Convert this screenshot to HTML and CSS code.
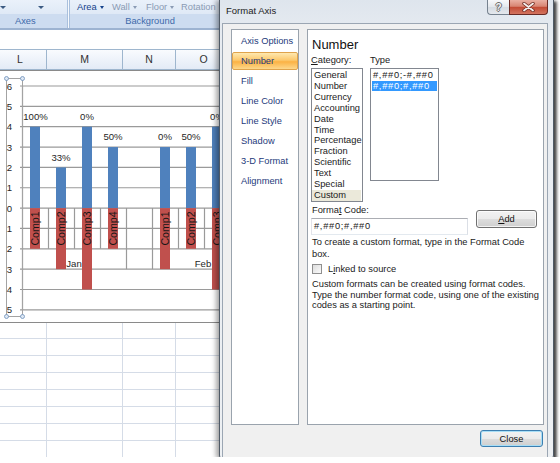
FILE: index.html
```html
<!DOCTYPE html>
<html>
<head>
<meta charset="utf-8">
<title>Format Axis</title>
<link rel="stylesheet" href="styles.css">
</head>
<body>
<div class="shot">
  <div class="excel">
    <div class="ribbon">
      <div class="grp grp-axes">
        <div class="grp-top"><span class="dd dd-a"></span><span class="dd dd-b"></span></div>
        <div class="grp-label">Axes</div>
      </div>
      <div class="grp-sep"></div>
      <div class="grp grp-bg">
        <div class="grp-top">
          <span class="rb rb-on rb-w35">Area<i class="caret"></i></span>
          <span class="rb rb-w34">Wall<i class="caret"></i></span>
          <span class="rb rb-w35">Floor<i class="caret"></i></span>
          <span class="rb">Rotation</span>
        </div>
        <div class="grp-label grp-label-c">Background</div>
      </div>
    </div>
    <div class="fbar"></div>
    <div class="colhdr">
      <div class="ch ch-l">L</div>
      <div class="ch ch-m">M</div>
      <div class="ch ch-n">N</div>
      <div class="ch ch-o">O</div>
    </div>
    <svg class="chart" viewBox="0 70 250 253" width="250" height="253">
      <rect class="c-area" x="-1.5" y="70.5" width="252" height="252"/>
      <g class="c-grid">
        <line x1="20" x2="250" y1="86" y2="86"/>
        <line x1="20" x2="250" y1="106.35" y2="106.35"/>
        <line x1="20" x2="250" y1="126.7" y2="126.7"/>
        <line x1="20" x2="250" y1="147.05" y2="147.05"/>
        <line x1="20" x2="250" y1="167.4" y2="167.4"/>
        <line x1="20" x2="250" y1="187.75" y2="187.75"/>
        <line x1="20" x2="250" y1="208.1" y2="208.1"/>
        <line x1="20" x2="250" y1="228.45" y2="228.45"/>
        <line x1="20" x2="250" y1="248.8" y2="248.8"/>
        <line x1="20" x2="250" y1="269.15" y2="269.15"/>
        <line x1="20" x2="250" y1="289.5" y2="289.5"/>
        <line x1="20" x2="250" y1="309.85" y2="309.85"/>
      </g>
      <g class="c-ticks">
        <line x1="48.5" x2="48.5" y1="208" y2="248.8"/>
        <line x1="74.5" x2="74.5" y1="208" y2="248.8"/>
        <line x1="100.5" x2="100.5" y1="208" y2="248.8"/>
        <line x1="126.5" x2="126.5" y1="208" y2="269.15"/>
        <line x1="152.5" x2="152.5" y1="208" y2="269.15"/>
        <line x1="178.5" x2="178.5" y1="208" y2="248.8"/>
        <line x1="204.5" x2="204.5" y1="208" y2="248.8"/>
        <line x1="230.5" x2="230.5" y1="208" y2="248.8"/>
      </g>
      <line class="c-axis" x1="22.5" x2="22.5" y1="86" y2="310"/>
      <rect class="c-selbox" x="6.5" y="78.5" width="16" height="238"/>
      <g class="c-bars">
        <rect class="b-pos" x="30" y="126.7" width="10" height="81.4"/>
        <rect class="b-neg" x="30" y="208.1" width="10" height="40.7"/>
        <rect class="b-pos" x="56" y="167.4" width="10" height="40.7"/>
        <rect class="b-neg" x="56" y="208.1" width="10" height="61.05"/>
        <rect class="b-pos" x="82" y="126.7" width="10" height="81.4"/>
        <rect class="b-neg" x="82" y="208.1" width="10" height="81.4"/>
        <rect class="b-pos" x="108" y="147.05" width="10" height="61.05"/>
        <rect class="b-neg" x="108" y="208.1" width="10" height="40.7"/>
        <rect class="b-pos" x="160" y="147.05" width="10" height="61.05"/>
        <rect class="b-neg" x="160" y="208.1" width="10" height="61.05"/>
        <rect class="b-pos" x="186" y="147.05" width="10" height="61.05"/>
        <rect class="b-neg" x="186" y="208.1" width="10" height="40.7"/>
        <rect class="b-pos" x="212" y="126.7" width="10" height="81.4"/>
        <rect class="b-neg" x="212" y="208.1" width="10" height="81.4"/>
      </g>
      <g class="c-ylabs">
        <text class="c-ylab" x="6.8" y="86">6</text>
        <text class="c-ylab" x="6.8" y="106.35">5</text>
        <text class="c-ylab" x="6.8" y="126.7">4</text>
        <text class="c-ylab" x="6.8" y="147.05">3</text>
        <text class="c-ylab" x="6.8" y="167.4">2</text>
        <text class="c-ylab" x="6.8" y="187.75">1</text>
        <text class="c-ylab" x="6.8" y="208.1">0</text>
        <text class="c-ylab" x="6.8" y="228.45">1</text>
        <text class="c-ylab" x="6.8" y="248.8">2</text>
        <text class="c-ylab" x="6.8" y="269.15">3</text>
        <text class="c-ylab" x="6.8" y="289.5">4</text>
        <text class="c-ylab" x="6.8" y="309.85">5</text>
      </g>
      <g class="c-dlabs">
        <text class="c-mid" x="35.5" y="116">100%</text>
        <text class="c-mid" x="61" y="157">33%</text>
        <text class="c-mid" x="87" y="116">0%</text>
        <text class="c-mid" x="113" y="136">50%</text>
        <text class="c-mid" x="165" y="136">0%</text>
        <text class="c-mid" x="191" y="136">50%</text>
        <text class="c-mid" x="217" y="116">0%</text>
      </g>
      <g class="c-cats">
        <text class="c-mid c-cat" x="35" y="228.5" transform="rotate(-90 35 228.5)">Comp1</text>
        <text class="c-mid c-cat" x="61" y="228.5" transform="rotate(-90 61 228.5)">Comp2</text>
        <text class="c-mid c-cat" x="87" y="228.5" transform="rotate(-90 87 228.5)">Comp3</text>
        <text class="c-mid c-cat" x="113" y="228.5" transform="rotate(-90 113 228.5)">Comp4</text>
        <text class="c-mid c-cat" x="165" y="228.5" transform="rotate(-90 165 228.5)">Comp1</text>
        <text class="c-mid c-cat" x="191" y="228.5" transform="rotate(-90 191 228.5)">Comp2</text>
        <text class="c-mid c-cat" x="217" y="228.5" transform="rotate(-90 217 228.5)">Comp3</text>
        <text class="c-mid" x="74" y="263">Jan</text>
        <text class="c-mid" x="203" y="263">Feb</text>
      </g>
      <g class="c-handles">
        <circle cx="6.5" cy="78.5" r="2"/>
        <circle cx="22.5" cy="78.5" r="2"/>
        <circle cx="6.5" cy="316.5" r="2"/>
        <circle cx="22.5" cy="316.5" r="2"/>
      </g>
    </svg>
    <div class="cells">
      <div class="cc cc-l"></div>
      <div class="cc cc-m"></div>
      <div class="cc cc-n"></div>
      <div class="cc cc-o"></div>
    </div>
  </div>

  <div class="dialog">
    <div class="titlebar">
      <span class="dlg-title">Format Axis</span>
      <div class="capbtns">
        <span class="cap cap-help">?</span>
        <span class="cap cap-close">
          <svg class="xglyph" width="13" height="10" viewBox="0 0 13 10">
            <path class="x-out" d="M2 1.5 L11 8.5 M11 1.5 L2 8.5"/>
            <path class="x-in" d="M2 1.5 L11 8.5 M11 1.5 L2 8.5"/>
          </svg>
        </span>
      </div>
    </div>
    <div class="client">
      <div class="panes">
        <ul class="navlist">
          <li>Axis Options</li>
          <li class="is-sel">Number</li>
          <li>Fill</li>
          <li>Line Color</li>
          <li>Line Style</li>
          <li>Shadow</li>
          <li>3-D Format</li>
          <li>Alignment</li>
        </ul>
        <div class="panel">
          <div class="ph">Number</div>
          <div class="lists">
            <div class="lcol">
              <div class="lbl"><u>C</u>ategory:</div>
              <ul class="lb lb-cat">
                <li>General</li>
                <li>Number</li>
                <li>Currency</li>
                <li>Accounting</li>
                <li>Date</li>
                <li>Time</li>
                <li>Percentage</li>
                <li>Fraction</li>
                <li>Scientific</li>
                <li>Text</li>
                <li>Special</li>
                <li class="is-cur">Custom</li>
              </ul>
            </div>
            <div class="lcol lcol-type">
              <div class="lbl">Type</div>
              <ul class="lb lb-type">
                <li class="code">#,##0;-#,##0</li>
                <li class="code is-act">#,##0;#,##0</li>
              </ul>
            </div>
          </div>
          <div class="fc-row">
            <div class="fc-col">
              <div class="lbl">Forma<u>t</u> Code:</div>
              <div class="input code">#,##0;#,##0</div>
            </div>
            <div class="btn btn-add"><u>A</u>dd</div>
          </div>
          <p class="hint">To create a custom format, type in the Format Code<br>box.</p>
          <div class="chk"><span class="chkbox"></span><span>L<u>i</u>nked to source</span></div>
          <p class="note">Custom formats can be created using format codes.<br>Type the number format code, using one of the existing<br>codes as a starting point.</p>
        </div>
      </div>
      <div class="foot"><div class="btn btn-close">Close</div></div>
    </div>
  </div>
</div>
</body>
</html>
```

FILE: styles.css
```css
* { box-sizing: border-box; }
html, body { margin: 0; padding: 0; background: #fff; }
body { font-family: "Liberation Sans", Arial, sans-serif; }

.shot {
  position: relative;
  width: 554px;
  height: 457px;
  box-shadow: 2px 2px 3px 1px rgba(0,0,0,.45);
}

/* ---------- Excel background ---------- */
.excel {
  width: 554px;
  height: 457px;
  overflow: hidden;
  display: flex;
  flex-direction: column;
  background: #fff;
}
.ribbon {
  flex: none;
  height: 30px;
  display: flex;
  border-bottom: 2px solid #9db3d1;
  background: #e3ecf8;
}
.grp { flex: none; display: flex; flex-direction: column; }
.grp-axes { width: 67px; }
.grp-bg { width: 160px; }
.grp-sep {
  flex: none;
  width: 3px;
  border-left: 1px solid #a9c0dd;
  border-right: 1px solid #a9c0dd;
  background: #f6f9fd;
}
.grp-top {
  height: 14px;
  display: flex;
  align-items: center;
  font-size: 9.3px;
  background: linear-gradient(#eaf1fa, #dfe9f6);
}
.grp-bg .grp-top { padding-left: 7px; }
.grp-label {
  height: 14px;
  line-height: 14px;
  font-size: 9.3px;
  color: #3e6aaa;
  background: #cddcf0;
  padding-left: 15px;
  white-space: nowrap;
}
.grp-label-c { padding-left: 0; text-align: center; }
.dd {
  width: 0; height: 0;
  border-left: 3px solid transparent;
  border-right: 3px solid transparent;
  border-top: 3px solid #3b5a82;
}
.dd-b { margin-left: 32px; }
.rb { flex: none; color: #8b9bb4; white-space: nowrap; display: flex; align-items: center; }
.rb-on { color: #15428b; }
.rb-w35 { width: 35px; }
.rb-w34 { width: 34px; }
.caret {
  display: inline-block;
  margin-left: 3px;
  width: 0; height: 0;
  border-left: 2.5px solid transparent;
  border-right: 2.5px solid transparent;
  border-top: 3px solid currentColor;
}
.fbar { flex: none; height: 19px; background: #fff; }
.colhdr {
  flex: none;
  height: 21px;
  display: flex;
  border-top: 1px solid #9eb6ce;
  border-bottom: 1px solid #9eb6ce;
  background: linear-gradient(#f9fbfe, #e3ebf6);
}
.ch {
  flex: none;
  font-size: 10.5px;
  line-height: 19px;
  color: #333;
  text-align: center;
  border-right: 1px solid #9eb6ce;
}
.ch-l { width: 47px; padding-right: 6px; }
.ch-m { width: 76px; }
.ch-n { width: 53px; }
.ch-o { width: 56px; }

.chart { display: block; flex: none; width: 250px; height: 253px; }
.chart text {
  font-family: "Liberation Sans", Arial, sans-serif;
  font-size: 9.6px;
  fill: #1f1f1f;
}
.chart text.c-cat { font-size: 10.6px; fill: #161616; }
.c-mid { text-anchor: middle; dominant-baseline: central; }
.c-ylab { dominant-baseline: central; }
.c-area { fill: #fff; stroke: #8a8a8a; }
.c-grid line, .c-ticks line { stroke: #9a9a9a; stroke-width: 1.2; }
.c-axis { stroke: #868686; stroke-width: 1.2; }
.c-selbox { fill: none; stroke: #a3a3a3; }
.b-pos { fill: #4f81bd; }
.b-neg { fill: #c0504d; }
.c-handles circle { fill: #dfe9f5; stroke: #6d8fba; stroke-width: .8; }

.cells {
  flex: 1;
  display: flex;
  background: repeating-linear-gradient(#fff 0 16px, #d5dce7 16px 17px);
  background-position: 0 -1px;
}
.cc { flex: none; border-right: 1px solid #d5dce7; }
.cc-l { width: 47px; }
.cc-m { width: 76px; }
.cc-n { width: 53px; }
.cc-o { width: 56px; }

/* ---------- Dialog (a window floating over the sheet) ---------- */
.dialog {
  position: absolute;
  left: 219px;
  top: 0;
  width: 335px;
  height: 461px;
  display: flex;
  flex-direction: column;
  border: 1px solid #4f5a66;
  border-top: 0;
  border-radius: 0 0 6px 6px;
  background: linear-gradient(#dee5ed, #e8ecf1 40px, #edf0f3);
  box-shadow: -3px 0 5px rgba(0,0,0,.35), 2px 2px 3px rgba(0,0,0,.5);
  font-size: 9.3px;
  color: #1a1a1a;
}
.titlebar {
  flex: none;
  height: 23px;
  display: flex;
  justify-content: space-between;
  align-items: flex-start;
  padding: 0 5px 0 6px;
}
.dlg-title { line-height: 22px; font-size: 9.5px; color: #1c1c1c; }
.capbtns { display: flex; }
.cap {
  height: 15px;
  display: flex;
  align-items: center;
  justify-content: center;
}
.cap-help {
  width: 22px;
  border: 1px solid #76828f;
  border-top: 0;
  border-right: 0;
  border-radius: 0 0 0 4px;
  background: linear-gradient(#f8f9fb, #e3e7ec 50%, #d5dbe2 51%, #e4e8ed);
  color: #f4f4f4;
  font-size: 10px;
  font-weight: bold;
  text-shadow: 1px 0 #6a6a6a, -1px 0 #6a6a6a, 0 1px #6a6a6a, 0 -1px #6a6a6a;
}
.cap-close {
  width: 39px;
  border: 1px solid #6a2a24;
  border-top: 0;
  border-radius: 0 0 4px 0;
  background: linear-gradient(#eab0a3, #d88573 45%, #c34b35 52%, #d3745f);
}
.xglyph { display: block; }
.x-out { stroke: #6d2a20; stroke-width: 3.4; stroke-linecap: round; fill: none; }
.x-in { stroke: #f6f0ee; stroke-width: 1.8; stroke-linecap: round; fill: none; }

.client {
  flex: 1;
  margin: 0 5px 2px 2px;
  border: 1px solid #9ba6b3;
  background: #f0f0f0;
  display: flex;
  flex-direction: column;
  padding: 5px 3px 0 8px;
}
.panes { flex: none; height: 396px; display: flex; gap: 8px; }
.navlist {
  flex: none;
  width: 68px;
  margin: 0;
  padding: 1px 0;
  list-style: none;
  border: 1px solid #9aa3ad;
  background: #fff;
}
.navlist li {
  height: 20px;
  line-height: 20px;
  padding-left: 9px;
  color: #1e3a7b;
  white-space: nowrap;
}
.navlist li.is-sel {
  height: 18px;
  margin: 1px 0;
  line-height: 16px;
  padding-left: 8px;
  border: 1px solid #dfa34c;
  border-radius: 2px;
  background: linear-gradient(#fee8b0, #fcc86c 45%, #fbb244 55%, #fdd88c);
}
.panel {
  flex: 1;
  border: 1px solid #9aa3ad;
  background: #fff;
  padding: 7px 3px 0 3px;
}
.ph { font-size: 13px; line-height: 16px; padding-left: 1px; color: #111; }
.lists { display: flex; margin-top: 2px; }
.lcol { flex: none; display: flex; flex-direction: column; }
.lcol-type { margin-left: 7px; }
.lbl { line-height: 11px; height: 11px; white-space: nowrap; }
.lb {
  margin: 2px 0 0;
  padding: 1px 0 0;
  list-style: none;
  border: 1px solid #828790;
  background: #fff;
  overflow: hidden;
}
.lb li { white-space: nowrap; }
.lb-cat { width: 52px; height: 134px; }
.lb-cat li { line-height: 10.9px; padding-left: 2px; }
.lb-cat li.is-cur { background: #ebe9da; margin-right: 1px; }
.lb-type { width: 69px; height: 113px; padding: 1px 1px 0; }
.lb-type li { line-height: 10.5px; padding-left: 1px; }
.lb-type li.is-act { background: #3399ff; color: #fff; }
.code { letter-spacing: .7px; }

.fc-row { display: flex; align-items: flex-start; margin-top: 3px; }
.fc-col { flex: none; display: flex; flex-direction: column; }
.fc-col .lbl { padding-left: 1px; }
.input {
  margin-top: 2px;
  width: 157px;
  height: 17px;
  line-height: 15px;
  padding-left: 2px;
  border: 1px solid #abadb3;
  border-right-color: #dbdfe6;
  border-bottom-color: #e3e9ef;
  border-left-color: #e2e3ea;
  background: #fff;
}
.btn {
  display: flex;
  align-items: center;
  justify-content: center;
  border: 1px solid #707070;
  border-radius: 3px;
  background: linear-gradient(#f2f2f2, #ebebeb 50%, #dddddd 51%, #cfcfcf);
  box-shadow: inset 0 0 0 1px rgba(255,255,255,.75);
  color: #111;
  font-size: 9.3px;
}
.btn-add { flex: none; width: 61px; height: 18px; margin: 5px 0 0 8px; }
.hint { margin: 2px 0 0; padding-left: 1px; line-height: 11.5px; white-space: nowrap; }
.chk { display: flex; align-items: center; gap: 6px; margin-top: 4px; height: 10px; }
.chkbox {
  flex: none;
  width: 10px;
  height: 10px;
  margin-left: 1px;
  border: 1px solid #8f8f8f;
  background: linear-gradient(135deg, #dcdcdc, #fbfbfb);
}
.note { margin: 5px 0 0; padding-left: 1px; line-height: 10.5px; white-space: nowrap; }
.foot { flex: none; display: flex; justify-content: flex-end; padding: 5px 1px 0 0; }
.btn-close {
  width: 63px;
  height: 17px;
  border-color: #3c7fb1;
  box-shadow: inset 0 0 0 1px #a8def6;
}
```
